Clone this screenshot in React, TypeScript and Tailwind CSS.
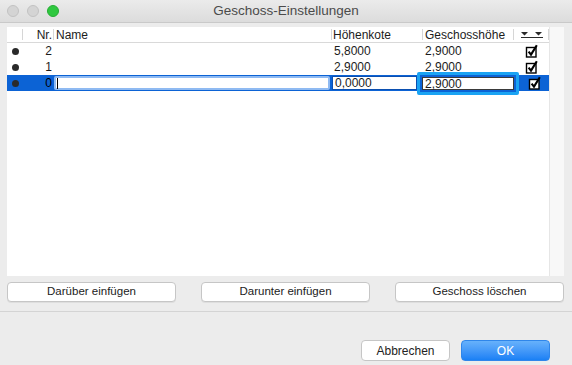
const rows = [
  { nr: '2', hoehe: '5,8000', geschoss: '2,9000' },
  { nr: '1', hoehe: '2,9000', geschoss: '2,9000' },
]

function Check() {
  return (
    <svg width="14" height="14" viewBox="0 0 14 14" className="block">
      <rect x="1.5" y="3.5" width="9.5" height="9.5" fill="white" stroke="black" strokeWidth="1.4" />
      <path d="M3.6 7.6 L6 10.6 L11.8 1.2" fill="none" stroke="black" strokeWidth="2.1" />
    </svg>
  )
}

function Bullet() {
  return <span className="block w-[7px] h-[7px] rounded-full bg-[#2a2a2a]" />
}

function HeaderSep() {
  return <span className="block w-px h-[11px] bg-[#d6d6d6]" />
}

export default function App() {
  return (
    <div
      className="w-[572px] h-[365px] bg-[#ececec] flex flex-col overflow-hidden text-[#1c1c1c]"
      style={{ fontFamily: '"Liberation Sans", Arial, sans-serif' }}
    >
      {/* Titelleiste */}
      <div className="h-[23px] shrink-0 grid grid-cols-[1fr_auto_1fr] items-center bg-gradient-to-b from-[#ebebeb] to-[#dcdcdc] border-b border-[#c9c9c9]">
        <div className="flex items-center gap-[8px] pl-[7px]">
          <span className="w-[12px] h-[12px] rounded-full bg-[#d4d4d4] border border-[#c2c2c2]" />
          <span className="w-[12px] h-[12px] rounded-full bg-[#d4d4d4] border border-[#c2c2c2]" />
          <span className="w-[12px] h-[12px] rounded-full bg-[#2fc840] border border-[#26ad34]" />
        </div>
        <div className="text-[13.5px] text-[#4b4b4b] leading-none">Geschoss-Einstellungen</div>
        <div />
      </div>

      {/* Tabelle */}
      <div className="mt-[4px] ml-[7px] mr-[8px] h-[249px] shrink-0 flex bg-white">
        <div className="w-[542px] flex flex-col text-[12px] leading-none">
          <div className="h-[16px] flex items-center border-b border-[#d9d9d9]">
            <div className="w-[16px] flex justify-end"><HeaderSep /></div>
            <div className="w-[31px] flex items-center justify-end">
              <span className="pr-[1px]">Nr.</span>
              <HeaderSep />
            </div>
            <div className="w-[278px] flex items-center justify-between pl-[2px]">
              <span>Name</span>
              <HeaderSep />
            </div>
            <div className="w-[91px] flex items-center justify-between pl-[1px]">
              <span>Höhenkote</span>
              <HeaderSep />
            </div>
            <div className="w-[91px] flex items-center justify-between pl-[2px]">
              <span>Geschosshöhe</span>
              <HeaderSep />
            </div>
            <div className="w-[35px] flex items-center justify-between">
              <span className="pl-[7px] flex flex-col items-center">
                <svg width="22" height="6" viewBox="0 0 22 6" className="block">
                  <path d="M0 0 H7 L3.5 3.5 Z M14 0 H21 L17.5 3.5 Z" fill="#2a2a2a" />
                  <rect x="0" y="5" width="22" height="1" fill="#2a2a2a" />
                </svg>
              </span>
              <HeaderSep />
            </div>
          </div>

          {rows.map((r) => (
            <div key={r.nr} className="h-[16px] flex items-center">
              <div className="w-[16px] flex justify-center"><Bullet /></div>
              <div className="w-[31px] text-right pr-[2px]">{r.nr}</div>
              <div className="w-[278px]" />
              <div className="w-[91px] pl-[2px]">{r.hoehe}</div>
              <div className="w-[91px] pl-[2px]">{r.geschoss}</div>
              <div className="w-[35px] flex justify-center pl-[1px]"><Check /></div>
            </div>
          ))}

          <div className="h-[16px] flex items-center bg-[#0c63d5]">
            <div className="w-[16px] flex justify-center"><Bullet /></div>
            <div className="w-[31px] text-right pr-[2px] text-black">0</div>
            <div className="w-[278px] h-full pr-[2px] py-px">
              <div className="h-full bg-white border-2 border-[#8fbaf2] rounded-[2px] flex items-center pl-[1px]">
                <span className="w-px h-[11px] bg-black" />
              </div>
            </div>
            <div className="w-[85px] h-full py-px">
              <div className="h-full bg-white border border-[#0b4fb0] flex items-center pl-[2px]">0,0000</div>
            </div>
            <div className="w-[97px] h-full relative">
              <div className="absolute left-[0px] right-[-5px] top-[-3px] bottom-[-4px] border-[3px] border-[#1aa3f3] rounded-[2px] p-[2px] bg-[#0c63d5]">
                <div className="h-full bg-white border border-[#3a3a3a] flex items-center pl-[2px]">2,9000</div>
              </div>
            </div>
            <div className="w-[35px] flex justify-center pl-[7px]"><Check /></div>
          </div>
        </div>
        <div className="flex-1 bg-[#f8f8f8] border-l border-[#e6e6e6]" />
      </div>

      {/* Aktionen */}
      <div className="mt-[6px] ml-[7px] mr-[8px] grid grid-cols-3 gap-[25px] text-[11.5px]">
        {['Darüber einfügen', 'Darunter einfügen', 'Geschoss löschen'].map((t) => (
          <button
            key={t}
            className="h-[20px] bg-white border border-[#c6c6c6] rounded-[4px] shadow-[0_1px_0_rgba(0,0,0,0.06)] text-[#222]"
          >
            {t}
          </button>
        ))}
      </div>

      <div className="mt-[9px] h-px bg-[#d4d4d4]" />

      <div className="mt-[28px] flex justify-end gap-[11px] pr-[22px] text-[12px]">
        <button className="w-[89px] h-[21px] bg-white border border-[#c6c6c6] rounded-[4px] text-[#222]">
          Abbrechen
        </button>
        <button className="w-[89px] h-[21px] rounded-[4px] bg-gradient-to-b from-[#67b1fb] to-[#1980f5] border border-[#2f86ea] text-white">
          OK
        </button>
      </div>
    </div>
  )
}
